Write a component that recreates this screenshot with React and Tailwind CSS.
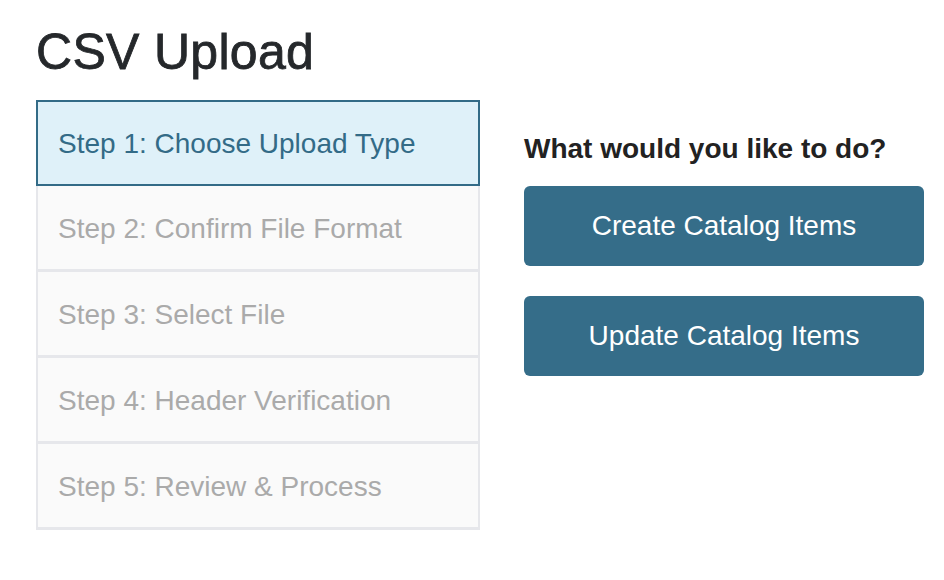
import React from 'react';

const steps = [
    'Step 1: Choose Upload Type',
    'Step 2: Confirm File Format',
    'Step 3: Select File',
    'Step 4: Header Verification',
    'Step 5: Review & Process',
];

const App = () => {
    return (
        <div className="min-h-screen bg-white px-[36px] pt-[22px] font-['Liberation_Sans',Arial,sans-serif]">
            <h1 className="text-[50px] leading-[60px] tracking-[0.3px] text-[#25282b] [-webkit-text-stroke:0.8px_#25282b]">CSV Upload</h1>
            <div className="mt-[18px] flex gap-[44px]">
                <div className="w-[444px] shrink-0">
                    {steps.map((label, i) =>
                        i === 0 ? (
                            <div
                                key={label}
                                className="flex h-[86px] items-center border-2 border-[#336b87] bg-[#dff1f9] px-[20px] pt-[2px] text-[28px] text-[#336b87]"
                            >
                                {label}
                            </div>
                        ) : (
                            <div
                                key={label}
                                className="flex h-[86px] items-center border-x-2 border-b-[3px] border-[#e6e7eb] bg-[#fafafa] px-[20px] pt-[2px] text-[28px] text-[#aaaaaa]"
                            >
                                {label}
                            </div>
                        )
                    )}
                </div>
                <div className="w-[400px] shrink-0 pt-[32px]">
                    <p className="text-[28px] font-bold leading-[34px] text-[#222222]">What would you like to do?</p>
                    <div className="mt-[20px] flex flex-col gap-[30px]">
                        <button className="h-[80px] w-full rounded-[6px] bg-[#356d89] text-[28px] text-white">
                            Create Catalog Items
                        </button>
                        <button className="h-[80px] w-full rounded-[6px] bg-[#356d89] text-[28px] text-white">
                            Update Catalog Items
                        </button>
                    </div>
                </div>
            </div>
        </div>
    );
};

export default App;
